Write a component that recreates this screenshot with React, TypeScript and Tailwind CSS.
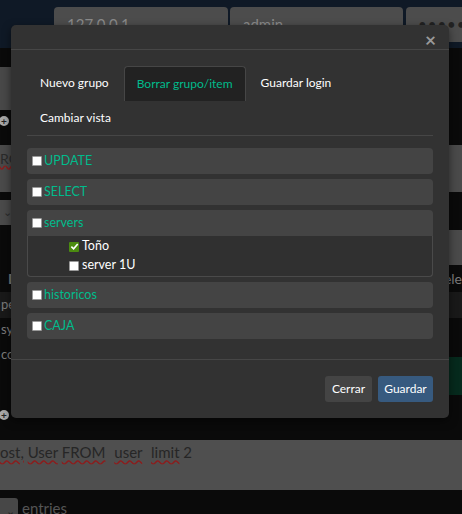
import React from "react";

const font = { fontFamily: "Lato, 'Open Sans', sans-serif" };

function Box({ checked = false }: { checked?: boolean }) {
  if (checked) {
    return (
      <span className="flex h-[10px] w-[10px] items-center justify-center rounded-[1px] bg-[#4b8b10]">
        <svg width="9" height="9" viewBox="0 0 10 10">
          <path d="M1.5 5.2 L4 7.6 L8.6 2.2" fill="none" stroke="#fff" strokeWidth="1.8" />
        </svg>
      </span>
    );
  }
  return <span className="block h-[10px] w-[10px] rounded-[1px] border border-[#9a9a9a] bg-white" />;
}

function Plus() {
  return (
    <span className="-ml-[1px] flex h-[10px] w-[10px] items-center justify-center rounded-full bg-[#a8a8a8] text-[10px] font-bold leading-none text-[#222]">
      +
    </span>
  );
}

function Group({ name, items }: { name: string; items?: { label: string; checked?: boolean }[] }) {
  return (
    <div className="rounded-[4px] bg-[#444444]">
      <div className="flex h-[26px] items-center gap-[2px] pl-[5px]">
        <Box />
        <span className="text-[12.5px] text-[#00bc8c]">{name}</span>
      </div>
      {items && (
        <div className="rounded-b-[4px] border border-t-0 border-[#4a4a4a] bg-[#303030] py-[1px] pl-[41px]">
          {items.map((it) => (
            <div key={it.label} className="flex h-[19px] items-center gap-[3px]">
              <Box checked={it.checked} />
              <span className="text-[12.5px] text-white">{it.label}</span>
            </div>
          ))}
        </div>
      )}
    </div>
  );
}

export default function App() {
  return (
    <div className="relative h-[514px] w-[462px] overflow-hidden bg-[#0a0a0a]" style={font}>
      {/* page behind the backdrop */}
      <div className="flex h-[48px] gap-[2px] bg-[#0f1926] pl-[54px] pt-[7px]">
        <div className="flex h-[35px] w-[174px] shrink-0 items-center rounded-t-[4px] bg-[#4c4c4c] px-[13px] text-[15px] text-[#8a8a8a]">127.0.0.1</div>
        <div className="flex h-[35px] w-[173px] shrink-0 items-center rounded-t-[4px] bg-[#4c4c4c] px-[13px] text-[15px] text-[#8a8a8a]">admin</div>
        <div className="ml-[1px] flex h-[35px] w-[80px] shrink-0 items-center rounded-tl-[4px] bg-[#4c4c4c] px-[12px] text-[15px] tracking-[1px] text-[#222]">•••••••</div>
      </div>
      <div className="h-[19px]" />
      <div className="h-[43px] w-[40px] bg-[#484848]" />
      <div className="flex h-[35px] items-start pt-[6px]">
        <Plus />
      </div>
      <div className="h-[47px] bg-[#4a4a4a] pt-[3px] text-[14px] text-[#2a2a2a]">
        <span className="underline decoration-[#8a1d1d] decoration-wavy">RO</span>
      </div>
      <div className="h-[8px]" />
      <div className="flex h-[25px] w-[40px] items-center justify-end bg-[#4a4a4a] pr-[28px] text-[11px] text-[#2a2a2a]">⌄</div>
      <div className="flex h-[5px]" />
      <div className="ml-auto h-[35px] w-[40px] bg-[#4a4a4a]" />
      <div className="flex h-[27px] items-center justify-between text-[14px] text-[#7a7a7a]">
        <span className="pl-[8px] font-bold">D</span>
        <span>ele</span>
      </div>
      <div className="flex h-[26px] items-center bg-[#191919] pl-[1px] text-[13px] text-[#7a7a7a]">
        <span>pe</span>
      </div>
      <div className="flex h-[24px] items-center pl-[1px] text-[13px] text-[#7a7a7a]">
        <span>sys</span>
      </div>
      <div className="flex h-[38px] items-start justify-between pl-[1px] text-[13px] text-[#7a7a7a]">
        <span className="pt-[3px]">co</span>
        <div className="mt-[15px] h-[38px] w-[40px] bg-[#062a1d]" />
      </div>
      <div className="flex h-[40px] items-start pt-[30px]">
        <Plus />
      </div>
      <div className="h-[20px]" />
      <div className="h-[50px] bg-[#4f4f4f] pt-[1px] text-[15px] text-[#262626]">
        <span className="underline decoration-[#8a1d1d] decoration-wavy">ost,</span>{" "}
        <span className="underline decoration-[#8a1d1d] decoration-wavy">User</span>{" "}
        <span className="underline decoration-[#8a1d1d] decoration-wavy">FROM</span>{"  "}
        <span className="ml-[5px] underline decoration-[#8a1d1d] decoration-wavy">user</span>{"  "}
        <span className="ml-[5px] underline decoration-[#8a1d1d] decoration-wavy">limit</span> 2
      </div>
      <div className="flex items-start gap-[4px] pt-[8px]">
        <div className="flex h-[18px] w-[18px] items-end justify-end rounded-r-[3px] bg-[#474747] pr-[3px] text-[11px] leading-none text-[#222]">⌄</div>
        <span className="text-[15px] leading-[20px] text-[#555]">entries</span>
      </div>

      {/* modal */}
      <div className="absolute left-[11px] top-[25px] w-[438px] rounded-[5px] bg-[#323232] shadow-[0_3px_9px_rgba(0,0,0,0.5)]">
        <div className="flex h-[25px] items-end justify-end border-b border-[#464646] pr-[13px]">
          <span className="mb-[-1px] text-[19px] font-bold leading-[20px] text-[#9a9a9a]">×</span>
        </div>
        <div className="px-[16px] pb-[20px] pt-[16px]">
          <div className="flex flex-wrap border-b border-[#464646] text-[12px] text-white">
            <div className="mr-[2px] flex h-[34px] items-center px-[13px]">Nuevo grupo</div>
            <div className="mr-[2px] flex h-[35px] items-center rounded-t-[4px] border border-b-0 border-[#464646] bg-[#222222] px-[12px] text-[#00bc8c]">
              Borrar grupo/item
            </div>
            <div className="flex h-[34px] items-center px-[13px]">Guardar login</div>
            <div className="flex h-[34px] w-full items-center px-[13px]">Cambiar vista</div>
          </div>
          <div className="mt-[12px] flex flex-col gap-[5px]">
            <Group name="UPDATE" />
            <Group name="SELECT" />
            <Group
              name="servers"
              items={[
                { label: "Toño", checked: true },
                { label: "server 1U" },
              ]}
            />
            <Group name="historicos" />
            <Group name="CAJA" />
          </div>
        </div>
        <div className="flex justify-end gap-[6px] border-t border-[#464646] px-[16px] py-[16px]">
          <button className="h-[26px] w-[47px] rounded-[3px] bg-[#444444] text-[12px] text-white">Cerrar</button>
          <button className="h-[26px] w-[55px] rounded-[3px] bg-[#375a7f] text-[12px] text-white">Guardar</button>
        </div>
      </div>
    </div>
  );
}
